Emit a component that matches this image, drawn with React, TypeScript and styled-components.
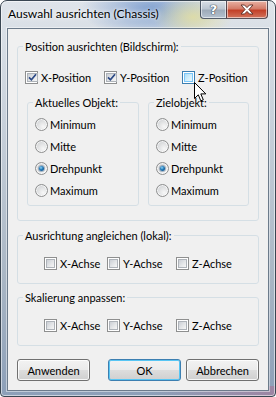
import React from "react";
import styled, { createGlobalStyle, css } from "styled-components";

const GlobalStyle = createGlobalStyle`
  html, body { margin: 0; padding: 0; background: #ffffff; }
  body { font-family: Lato, "Noto Sans", sans-serif; font-size: 11px; color: #000; }
  * { box-sizing: border-box; }
`;

const Window = styled.div`
  position: relative;
  width: 276px;
  height: 397px;
  display: flex;
  flex-direction: column;
  border: 1px solid #3a4652;
  border-radius: 7px 7px 4px 4px;
  box-shadow: inset 0 0 0 1px rgba(255, 255, 255, 0.55);
  background:
    radial-gradient(ellipse 40px 22px at 192px 16px, rgba(226, 222, 160, 0.85), rgba(226, 222, 160, 0) 100%),
    radial-gradient(ellipse 70px 30px at 150px 8px, rgba(100, 140, 200, 0.75), rgba(100, 140, 200, 0) 100%),
    linear-gradient(90deg, rgba(120, 150, 190, 0) 55%, rgba(170, 110, 145, 0.55) 100%) bottom / 100% 10px no-repeat,
    linear-gradient(180deg, #dfe4ea 0%, #c8d1db 30%, #a9b6c4 70%, #8c9fb8 100%);
  overflow: hidden;
`;

const TitleBar = styled.div`
  height: 27px;
  display: flex;
  align-items: flex-start;
  padding: 0 7px 0 7px;
`;

const Title = styled.div`
  margin-top: 5px;
  font-size: 12px;
  line-height: 16px;
  color: #000;
  text-shadow: 0 0 6px rgba(255, 255, 255, 0.95), 0 0 3px rgba(255, 255, 255, 0.9);
`;

const CaptionButtons = styled.div`
  margin-left: auto;
  margin-top: -1px;
  display: flex;
`;

const CaptionButton = styled.div<{ $kind: "help" | "close" }>`
  height: 19px;
  display: flex;
  align-items: center;
  justify-content: center;
  border: 1px solid rgba(40, 50, 65, 0.75);
  box-shadow: inset 0 0 0 1px rgba(255, 255, 255, 0.55);
  ${(p) =>
    p.$kind === "help"
      ? css`
          width: 26px;
          border-radius: 0 0 0 4px;
          border-right: none;
          background: linear-gradient(180deg, #d9dfe6 0%, #bcc6d1 45%, #9eabb9 55%, #b5c2cf 100%);
        `
      : css`
          width: 42px;
          border-radius: 0 0 4px 0;
          background: linear-gradient(180deg, #e9b2a4 0%, #d47c69 45%, #c34028 55%, #d2735c 100%);
        `}
`;

const HelpGlyph = styled.span`
  font-family: "DejaVu Sans", sans-serif;
  font-weight: bold;
  font-size: 13px;
  line-height: 13px;
  color: #fff;
  text-shadow: 0 0 1px #3a4656, 0 0 1px #3a4656, 0 0 1px #3a4656;
`;

const Client = styled.div`
  flex: 1;
  margin: 0 6px 5px 6px;
  background: #f0f0f0;
  border: 1px solid #6c7b8b;
  box-shadow: 0 0 0 1px rgba(255, 255, 255, 0.45);
  padding: 10px 9px 9px 9px;
  display: flex;
  flex-direction: column;
`;

const Group = styled.fieldset<{ $grow?: boolean; $width?: number; $mt?: number }>`
  margin: ${(p) => p.$mt ?? 0}px 0 0 0;
  padding: 0;
  min-width: 0;
  border: 1px solid #d5dfe5;
  border-radius: 3px;
  ${(p) => p.$grow && css`flex: 1;`}
  ${(p) => p.$width && css`width: ${p.$width}px; flex: none;`}
`;

const Legend = styled.legend`
  margin-left: 5px;
  padding: 0 2px;
  line-height: 15px;
  font-size: 11px;
`;

const GroupBody = styled.div<{ $pt: number; $pb: number; $pl: number; $pr?: number }>`
  padding: ${(p) => `${p.$pt}px ${p.$pr ?? 0}px ${p.$pb}px ${p.$pl}px`};
`;

const CheckRow = styled.div<{ $cols: string }>`
  display: grid;
  grid-template-columns: ${(p) => p.$cols};
  height: 15px;
  align-items: center;
`;

const Item = styled.label`
  display: flex;
  align-items: center;
  gap: 3px;
  line-height: 15px;
  white-space: nowrap;
`;

const Box = styled.span<{ $hover?: boolean }>`
  width: 13px;
  height: 13px;
  flex: none;
  border: 1px solid ${(p) => (p.$hover ? "#3c7fb1" : "#8e8f8f")};
  background: #fff;
  padding: 1px;
  display: flex;
`;

const BoxInner = styled.span<{ $hover?: boolean }>`
  flex: 1;
  display: flex;
  align-items: center;
  justify-content: center;
  border: 1px solid ${(p) => (p.$hover ? "#79c6f9" : "#aeb3b9")};
  background: ${(p) =>
    p.$hover
      ? "linear-gradient(135deg, #b1dff6 0%, #d6f0fb 60%, #e9f8fe 100%)"
      : "linear-gradient(135deg, #cbcfd5 0%, #e4e6e8 55%, #f6f6f6 100%)"};
`;

const InnerRow = styled.div`
  display: flex;
  gap: 9px;
  margin: 10px 0 0 2px;
`;

const RadioList = styled.div`
  display: flex;
  flex-direction: column;
  gap: 7px;
`;

const RadioItem = styled.label`
  display: flex;
  align-items: center;
  gap: 2px;
  height: 15px;
  white-space: nowrap;
`;

const RadioCircle = styled.span<{ $on?: boolean }>`
  width: 13px;
  height: 13px;
  flex: none;
  border-radius: 50%;
  border: 1px solid #8e8f8f;
  background: radial-gradient(circle at 65% 70%, #f7f7f7 0%, #e2e3e4 45%, #c5c8cc 100%);
  box-shadow: inset 0 0 0 1px rgba(255, 255, 255, 0.7);
  display: flex;
  align-items: center;
  justify-content: center;
  &::after {
    content: "";
    display: ${(p) => (p.$on ? "block" : "none")};
    width: 5px;
    height: 5px;
    border-radius: 50%;
    background: radial-gradient(circle at 40% 35%, #8fd4f7 0%, #1f77b6 45%, #0b3f73 100%);
    box-shadow: 0 0 0 1px rgba(30, 70, 110, 0.35);
  }
`;

const ButtonRow = styled.div`
  display: flex;
  gap: 5px;
  margin-top: 13px;
`;

const Button = styled.div<{ $default?: boolean; $push?: boolean }>`
  width: 73px;
  height: 22px;
  border-radius: 3px;
  border: 1px solid ${(p) => (p.$default ? "#3c7fb1" : "#707070")};
  background: linear-gradient(180deg, #f2f2f2 0%, #ebebeb 48%, #dddddd 52%, #cfcfcf 100%);
  box-shadow: inset 0 0 0 1px ${(p) => (p.$default ? "#58c6f4" : "rgba(255,255,255,0.8)")};
  display: flex;
  align-items: center;
  justify-content: center;
  font-size: 11px;
  ${(p) => p.$push && css`margin-left: auto;`}
`;

const Cursor = styled.svg`
  position: absolute;
  left: 193px;
  top: 81px;
`;

function Check({ checked, hover }: { checked?: boolean; hover?: boolean }) {
  return (
    <Box $hover={hover}>
      <BoxInner $hover={hover}>
        {checked && (
          <svg width="9" height="9" viewBox="0 0 9 9">
            <path d="M1 4.3 L3.4 6.8 L8 1.2" fill="none" stroke="#2c4a86" strokeWidth="1.7" />
          </svg>
        )}
      </BoxInner>
    </Box>
  );
}

function CheckItem({ label, checked, hover }: { label: string; checked?: boolean; hover?: boolean }) {
  return (
    <Item>
      <Check checked={checked} hover={hover} />
      {label}
    </Item>
  );
}

function Radio({ label, on }: { label: string; on?: boolean }) {
  return (
    <RadioItem>
      <RadioCircle $on={on} />
      {label}
    </RadioItem>
  );
}

function RadioGroup({ title, grow, width }: { title: string; grow?: boolean; width?: number }) {
  return (
    <Group $grow={grow} $width={width}>
      <Legend>{title}</Legend>
      <GroupBody $pt={7} $pb={7} $pl={7}>
        <RadioList>
          <Radio label="Minimum" />
          <Radio label="Mitte" />
          <Radio label="Drehpunkt" on />
          <Radio label="Maximum" />
        </RadioList>
      </GroupBody>
    </Group>
  );
}

function AxisGroup({ title, mt }: { title: string; mt: number }) {
  return (
    <Group $mt={mt}>
      <Legend>{title}</Legend>
      <GroupBody $pt={13} $pb={12} $pl={26}>
        <CheckRow $cols="63px 69px auto">
          <CheckItem label="X-Achse" />
          <CheckItem label="Y-Achse" />
          <CheckItem label="Z-Achse" />
        </CheckRow>
      </GroupBody>
    </Group>
  );
}

export default function App() {
  return (
    <>
      <GlobalStyle />
      <Window>
        <TitleBar>
          <Title>Auswahl ausrichten (Chassis)</Title>
          <CaptionButtons>
            <CaptionButton $kind="help">
              <HelpGlyph>?</HelpGlyph>
            </CaptionButton>
            <CaptionButton $kind="close">
              <svg width="14" height="11" viewBox="0 0 14 11">
                <path
                  d="M1 1 H4.5 L7 3.6 L9.5 1 H13 L8.9 5.5 L13 10 H9.5 L7 7.4 L4.5 10 H1 L5.1 5.5 Z"
                  fill="#ffffff"
                  stroke="#5a2a22"
                  strokeWidth="0.9"
                  strokeLinejoin="round"
                />
              </svg>
            </CaptionButton>
          </CaptionButtons>
        </TitleBar>
        <Client>
          <Group>
            <Legend>Position ausrichten (Bildschirm):</Legend>
            <GroupBody $pt={16} $pb={14} $pl={7} $pr={9}>
              <CheckRow $cols="79px 78px auto">
                <CheckItem label="X-Position" checked />
                <CheckItem label="Y-Position" checked />
                <CheckItem label="Z-Position" hover />
              </CheckRow>
              <InnerRow>
                <RadioGroup title="Aktuelles Objekt:" width={112} />
                <RadioGroup title="Zielobjekt:" grow />
              </InnerRow>
            </GroupBody>
          </Group>
          <AxisGroup title="Ausrichtung angleichen (lokal):" mt={7} />
          <AxisGroup title="Skalierung anpassen:" mt={6} />
          <ButtonRow>
            <Button>Anwenden</Button>
            <Button $default $push>
              OK
            </Button>
            <Button>Abbrechen</Button>
          </ButtonRow>
        </Client>
        <Cursor width="13" height="21" viewBox="0 0 13 21">
          <path
            d="M0.5 0.5 L0.5 16.5 L4.3 12.8 L6.8 18.8 L9.3 17.8 L6.8 11.9 L11.8 11.9 Z"
            fill="#ffffff"
            stroke="#000000"
            strokeWidth="1"
            strokeLinejoin="miter"
          />
        </Cursor>
      </Window>
    </>
  );
}
